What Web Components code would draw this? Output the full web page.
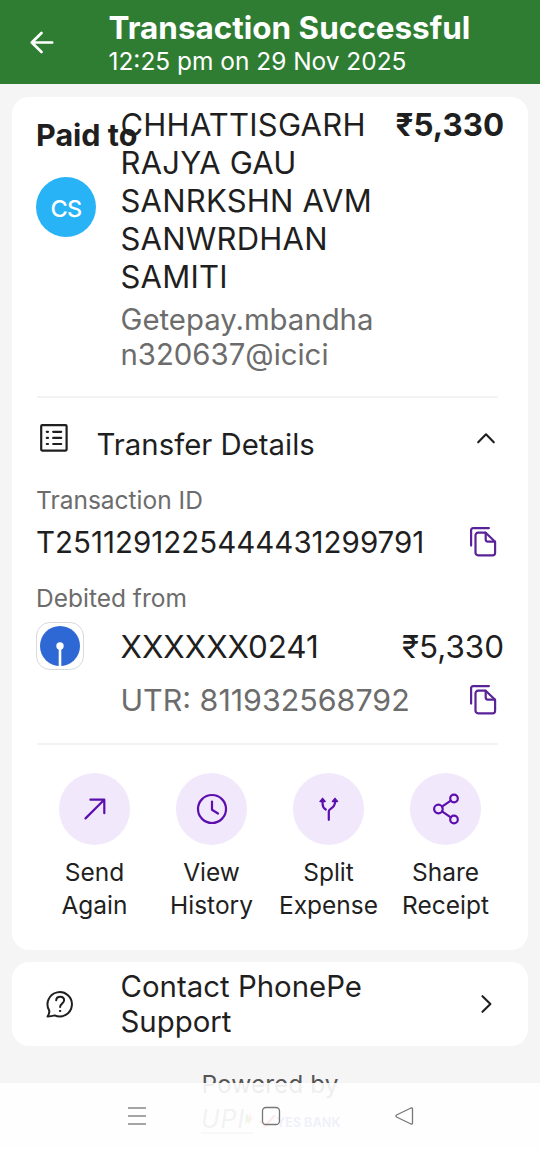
<!DOCTYPE html>
<html lang="en">
<head>
<meta charset="utf-8">
<title>Transaction Successful</title>
<style>
html,body{margin:0;padding:0}
body{width:540px;height:1149px;overflow:hidden;background:#f5f5f5;font-family:Inter,"Noto Sans",sans-serif;color:#1f1f1f}
</style>
</head>
<body>
<payment-page></payment-page>
<script>
const define = (name, html) => customElements.define(name, class extends HTMLElement {
  constructor() {
    super();
    const t = document.createElement('template');
    t.innerHTML = html;
    this.attachShadow({ mode: 'open' }).appendChild(t.content.cloneNode(true));
  }
});

const icons = {
  back: [24, 24, '<path d="M22.2 12.500H2M11.500 3 1.800 12.500l9.700 9.500" stroke="#fff" stroke-width="2.700"/>'],
  list: [28, 28, '<rect x="1.2" y="1.2" width="25.4" height="25.4" rx="1"/><path d="M6.8 7.8h1.200M13.2 7.8h8M6.8 13.9h1.200M13.2 13.9h8M6.8 20h1.200M13.2 20h8" stroke-width="2.2"/>'],
  up: [18, 11, '<path d="m1.2 9.3 7.8-8 7.8 8" stroke-width="2.1"/>'],
  right: [11, 18, '<path d="m1.5 1.2 7.9 7.8-7.9 7.8" stroke-width="2.1"/>'],
  copy: [28, 30, '<path d="M1.1 18.6V3.1a2 2 0 0 1 2-2h15.8"/><path d="M8.1 5.7h7.6l9.400 9.100v10.900a2.600 2.600 0 0 1-2.600 2.600H8.100A2.600 2.600 0 0 1 5.500 25.700V8.300a2.600 2.600 0 0 1 2.600-2.600Z"/><path d="M15.700 5.900v6.700a2 2 0 0 0 2 2h7.200"/>'],
  send: [22, 22, '<path d="M1.500 20.400 20.200 1.700M6.400 1.700h13.900v13.500"/>'],
  clock: [32, 32, '<circle cx="16" cy="16" r="14"/><path d="M16 8.600V16.800l6 3.700"/>'],
  split: [20, 24, '<path d="M9.800 22.800v-8.600c0-2.700 6.200-2.700 6.200-9V3M3.600 3v3.700c0 2.500 1.200 4.600 3.200 5.800"/><path d="m1 4.500 2.600-3.200L6.200 4.500ZM13.400 4.500 16 1.300l2.600 3.200Z" fill="currentColor" stroke-width="1.300"/>'],
  share: [28, 32, '<circle cx="6.400" cy="16" r="4.300"/><circle cx="22" cy="5.500" r="3.800"/><circle cx="22" cy="26.500" r="3.800"/><path d="m10 13.700 8.800-6M10 18.300l8.800 6"/>'],
  help: [28, 28, '<path d="M3.200 20.500A12.200 12.200 0 1 1 8.600 25.400C6.400 26 4.200 26.300 1.500 26.500 3 24.400 3.600 22.600 3.200 20.500Z" stroke-width="2"/><path d="M10.200 10.300c.3-4.700 7.900-4.600 7.900 0 0 3.600-4 3.100-4 6.700" stroke-width="2"/><circle cx="14" cy="21" r=".7" fill="currentColor" stroke-width="1"/>']
};
customElements.define('ui-icon', class extends HTMLElement {
  connectedCallback() {
    const [w, h, body] = icons[this.getAttribute('name')];
    const root = this.shadowRoot || this.attachShadow({ mode: 'open' });
    root.innerHTML = `<style>:host{display:block;flex:none}svg{display:block;overflow:visible}</style>
      <svg width="${w}" height="${h}" viewBox="0 0 ${w} ${h}" fill="none" stroke="currentColor" stroke-width="2.2" stroke-linecap="round" stroke-linejoin="round">${body}</svg>`;
  }
});

define('page-header', `<style>
:host{display:flex;box-sizing:border-box;height:84.400px;background:#2f7d33;color:#fff;padding:9px 30px 0;align-items:flex-start}
ui-icon{margin-top:21px;width:78.500px}
.title{font-size:31.450px;font-weight:700;line-height:38px;white-space:nowrap}
.time{font-size:24.450px;line-height:29px;white-space:nowrap}
</style>
<ui-icon name="back"></ui-icon>
<div><div class="title"><slot name="title"></slot></div><div class="time"><slot name="time"></slot></div></div>`);

define('surface-card', `<style>
:host{display:block;box-sizing:border-box;background:#fff;border-radius:17px;margin:0 12px}
</style><slot></slot>`);

define('payee-summary', `<style>
:host{display:grid;grid-template-columns:84.500px 266px 1fr;padding:9px 24px 0;height:291px;box-sizing:border-box}
.left{padding-top:10px}
.paid{font-size:30.500px;font-weight:700;line-height:38px;white-space:nowrap}
.avatar{width:60px;height:60px;border-radius:50%;background:#29b3f7;color:#fff;display:flex;align-items:center;justify-content:center;margin-top:23px;font-size:23.500px;font-weight:500;padding-top:3px;box-sizing:border-box;letter-spacing:-.7px}
.name{font-size:31px;line-height:38px;letter-spacing:.22px}
.vpa{font-size:29.350px;line-height:35px;color:#6c6c6c;margin-top:6.500px}
.amount{font-size:31.300px;font-weight:700;line-height:38px;text-align:right;white-space:nowrap;justify-self:end}
</style>
<div class="left"><div class="paid">Paid to</div><div class="avatar">CS</div></div>
<div><div class="name">CHHATTISGARH<br>RAJYA GAU<br>SANRKSHN AVM<br>SANWRDHAN<br>SAMITI</div>
<div class="vpa">Getepay.mbandha<br>n320637@icici</div></div>
<div class="amount">₹5,330</div>`);

define('thin-divider', `<style>:host{display:block;height:2px;margin:0 30px 0 25px;background:#f3f3f3}</style>`);

define('transfer-details', `<style>
:host{display:block;box-sizing:border-box;height:345px;padding:26px 24px 0}
.row{display:flex;align-items:flex-start}
.head{height:61px;padding-left:4px}
.head b{font-weight:400;font-size:29.350px;line-height:42px;margin-left:28.500px;flex:1;white-space:nowrap}
.head .chev{margin:9px 9px 0 0}
.label{font-size:24.500px;line-height:30px;color:#6c6c6c;white-space:nowrap}
.id{font-size:29.500px;line-height:42px;flex:1;white-space:nowrap}
.txn{margin-top:6px;height:62px}
.purple{color:#5a2298}
.copy{margin:6px 6px 0 0}
.debit{margin-top:9px;display:grid;grid-template-columns:84.500px 1fr auto;height:48px;align-items:center}
.bank{width:48px;height:48px;box-sizing:border-box;border:1px solid #d9d9d9;border-radius:14px;display:flex;align-items:center;justify-content:center}
.bank svg{display:block}
.acct,.amt{font-size:31.400px;line-height:40px;white-space:nowrap;padding-top:2px}
.utr{padding-left:84.500px;margin-top:10px}
.utr .copy{margin-top:5px}
.utr .num{font-size:30.400px;line-height:40px;color:#6c6c6c;flex:1;white-space:nowrap}
</style>
<div class="row head"><ui-icon name="list"></ui-icon><b>Transfer Details</b><ui-icon class="chev" name="up"></ui-icon></div>
<div class="label">Transaction ID</div>
<div class="row txn"><div class="id">T2511291225444431299791</div><ui-icon class="copy purple" name="copy"></ui-icon></div>
<div class="label">Debited from</div>
<div class="debit"><div class="bank"><svg width="40" height="40" viewBox="0 0 40 40"><circle cx="20" cy="20" r="20" fill="#2e68d5"/><circle cx="20" cy="20" r="3.700" fill="#fff"/><path d="M20 20v20" stroke="#fff" stroke-width="2.600"/></svg></div>
<div class="acct">XXXXXX0241</div><div class="amt">₹5,330</div></div>
<div class="row utr"><div class="num">UTR: 811932568792</div><ui-icon class="copy purple" name="copy"></ui-icon></div>`);

define('action-button', `<style>
:host{display:flex;flex-direction:column;align-items:center;width:117px}
.disc{width:71.500px;height:71.500px;border-radius:50%;background:#f1e8fc;color:#5c0fae;display:flex;align-items:center;justify-content:center}
.text{margin-top:11.500px;font-size:24.500px;line-height:33px;text-align:center}
</style>
<div class="disc"><slot name="icon"></slot></div><div class="text"><slot></slot></div>`);

define('action-row', `<style>:host{display:flex;justify-content:center;padding:28.400px 0 0}</style><slot></slot>`);

define('support-link', `<style>
:host{display:flex;align-items:center;height:84px;padding:0 36px 0 34px;box-sizing:border-box}
.text{margin-left:46.500px;flex:1;font-size:29.400px;line-height:35px;white-space:nowrap;padding-top:1px}
</style>
<ui-icon name="help"></ui-icon><div class="text"><slot></slot></div><ui-icon name="right"></ui-icon>`);

define('powered-by', `<style>
:host{display:block;text-align:center;padding-top:22px}
.caption{font-size:24.500px;line-height:33px;color:#555}
.brands{display:flex;padding-left:201px;gap:6px;margin-top:4px;height:32px;align-items:center}
.upi{font:italic 400 25px/22px Inter,sans-serif;color:#777;border-bottom:2px solid #bbb;height:24px;width:52px;display:flex}
.upi span{letter-spacing:1px}
.bank{font:700 12.600px/20px Inter,sans-serif;color:#6068c8;display:flex;align-items:center;white-space:nowrap;padding-top:4px}
</style>
<div class="caption">Powered by</div>
<div class="brands"><div class="upi"><span>UPI</span><svg width="9" height="22" viewBox="0 0 9 22"><path d="M2 4 5 11 0 18Z" fill="#299447"/><path d="M5 4 9 11 3 18Z" fill="#e87b22"/></svg></div>
<div class="bank"><svg width="17" height="16" viewBox="0 0 17 16"><path d="m1 6 5 5L16 0" fill="none" stroke="#e03a3a" stroke-width="2.400"/></svg>YES BANK</div></div>`);

define('system-nav', `<style>
:host{position:absolute;left:0;top:1083px;width:540px;height:66px;background:rgba(255,255,255,.9);display:grid;grid-template-columns:1fr 1fr 1fr;box-sizing:border-box;padding:0 68px 0 70px}
svg{display:block;justify-self:center;margin-top:23px}
</style>
<svg width="20" height="20" viewBox="0 0 20 20" stroke="#888" stroke-width="1.400" fill="none"><path d="M1 2h18M1 10h18M1 18h18"/></svg>
<svg width="20" height="20" viewBox="0 0 20 20" stroke="#777" stroke-width="1.300" fill="none"><rect x="1.500" y="1.500" width="17" height="17" rx="3.500"/></svg>
<svg width="20" height="20" viewBox="0 0 20 20" stroke="#777" stroke-width="1.300" fill="none" stroke-linejoin="round"><path d="M16 2 1.500 9Q.5 10 1.500 11L16 18Q17.500 18.300 17.500 17V3Q17.500 1.700 16 2Z"/></svg>`);

define('payment-page', `<style>
:host{display:block;position:relative;width:540px;height:1149px;overflow:hidden}
.main{height:853px;margin-top:12.600px}
.support{margin-top:12px}
</style>
<page-header><span slot="title">Transaction Successful</span><span slot="time">12:25 pm on 29 Nov 2025</span></page-header>
<surface-card class="main">
<payee-summary></payee-summary>
<thin-divider style="margin-top:8px"></thin-divider>
<transfer-details></transfer-details>
<thin-divider></thin-divider>
<action-row>
<action-button><ui-icon slot="icon" name="send"></ui-icon>Send<br>Again</action-button>
<action-button><ui-icon slot="icon" name="clock"></ui-icon>View<br>History</action-button>
<action-button><ui-icon slot="icon" name="split"></ui-icon>Split<br>Expense</action-button>
<action-button><ui-icon slot="icon" name="share"></ui-icon>Share<br>Receipt</action-button>
</action-row>
</surface-card>
<surface-card class="support"><support-link>Contact PhonePe<br>Support</support-link></surface-card>
<powered-by></powered-by>
<system-nav></system-nav>`);
</script>
</body>
</html>
